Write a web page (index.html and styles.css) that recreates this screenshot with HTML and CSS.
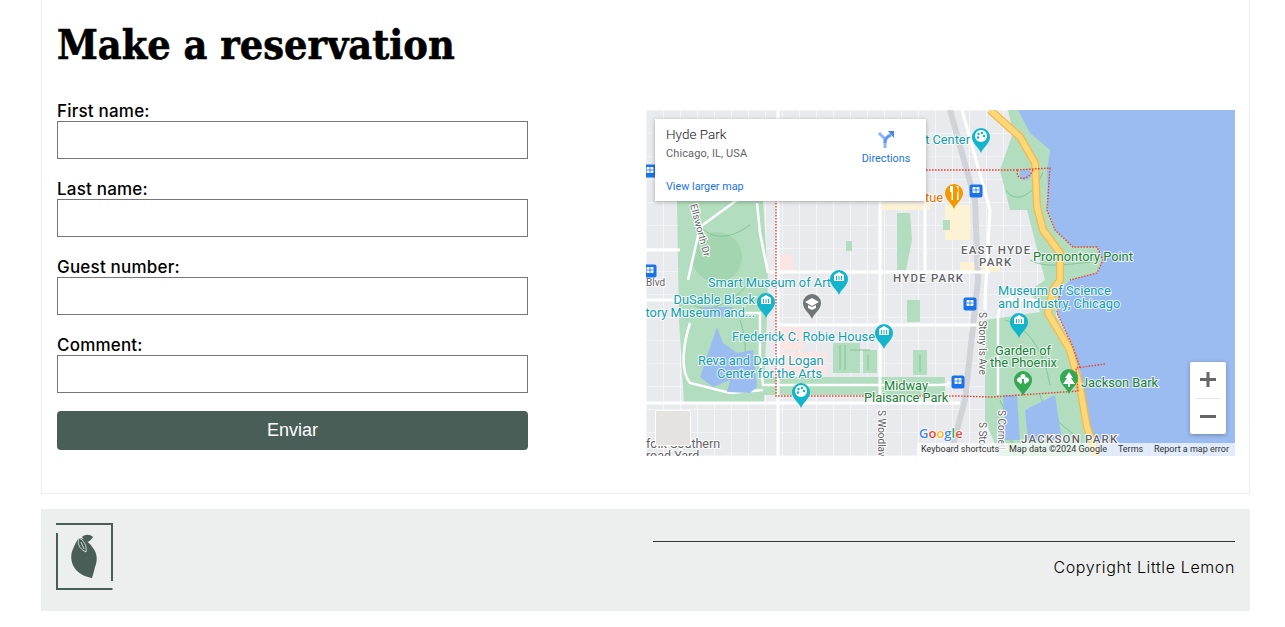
FILE: index.html
```html
<!DOCTYPE html>
<html lang="en">
<head>
<meta charset="utf-8">
<title>Make a reservation</title>
<link rel="stylesheet" href="styles.css">
</head>
<body>
<main class="card">
  <h1 class="title">Make a reservation</h1>
  <div class="columns">
    <form class="form">
      <div class="field"><label class="label" for="f1">First name:</label><input class="input" id="f1" type="text"></div>
      <div class="field"><label class="label" for="f2">Last name:</label><input class="input" id="f2" type="text"></div>
      <div class="field"><label class="label" for="f3">Guest number:</label><input class="input" id="f3" type="text"></div>
      <div class="field"><label class="label" for="f4">Comment:</label><input class="input" id="f4" type="text"></div>
      <button class="submit" type="button">Enviar</button>
    </form>
    <div class="map">
      <svg class="map-svg" viewBox="646 110 589 346" width="589" height="346" xmlns="http://www.w3.org/2000/svg">
        <defs>
          <pattern id="streets" x="646" y="110" width="17" height="23" patternUnits="userSpaceOnUse">
            <path class="street" d="M0 0V23M0 0H17"/>
          </pattern>
          <path id="pin" d="M0 0C-2-6-9-9-9-16A9 9 0 0 1 9-16C9-9 2-6 0 0Z"/>
          <g id="museum"><use href="#pin"/><path class="glyph" d="M-5-14V-20L0-23L5-20V-14ZM-3-19V-15H-2V-19ZM-.5-19V-15H.5V-19ZM2-19V-15H3V-19Z"/></g>
          <g id="palette"><use href="#pin"/><circle class="glyph" cx="0" cy="-17" r="6"/><circle cx="-2.5" cy="-19" r="1.2"/><circle cx="1" cy="-20" r="1.2"/><circle cx="3" cy="-17" r="1.2"/><circle cx="-3" cy="-15.5" r="1.2"/></g>
          <g id="transit"><rect class="transit" x="-6.5" y="-6.5" width="13" height="13" rx="2"/><rect class="glyph" x="-3.5" y="-4" width="7" height="6" rx="1"/><path class="transit-line" d="M0-4V2M-3.5-1H3.5M-2.5 4H2.5"/></g>
        </defs>
        <rect class="m-land" x="646" y="110" width="589" height="346"/>
        <rect fill="url(#streets)" x="646" y="110" width="589" height="346"/>
        <path class="m-pink" d="M778 327H803V350H778ZM778 352H827V375H778ZM778 255H793V273H778Z"/>
        <path class="m-sand" d="M880 203H930V210H880ZM945 205H970V240H945ZM960 262H1000V272H960Z"/>
        <path class="m-park" d="M677 200H763L768 280L764 403H684L679 320Z"/>
        <path class="m-park" d="M763 377H945V395H763Z"/>
        <path class="m-park" d="M897 213H910L912 240L906 270H897ZM943 220H950V230H943ZM907 300H920V322H907ZM833 343H860V373H833ZM863 350H877V373H863ZM913 350H927V375H913ZM846 241H852V251H846Z"/>
        <path class="m-park" d="M1000 170L1013 133L1008 110H1030L1050 150L1047 170L1048 210L1055 230L1073 247L1097 247L1103 260L1097 273L1070 280L1060 290L1057 313L1073 347L1080 370L1082 390L1087 423L1100 456H1000L985 420L985 320L1040 312L1030 290L1045 280L1027 210H1010Z"/>
        <circle class="m-park-d" cx="717" cy="257" r="25"/>
        <path class="m-sand" d="M1058 300L1075 345L1084 375L1072 345L1056 315Z"/>
        <path class="m-trail" d="M700 225C710 240 730 240 750 225M690 300C700 320 740 300 750 280M730 395C745 370 750 350 740 320M1006 190C1015 205 1035 195 1043 172M1030 260C1045 268 1062 265 1090 262M1005 320C1035 330 1045 360 1050 385M1040 395C1045 415 1070 430 1080 440M1000 400C1010 420 1010 440 1015 456M840 345V370M845 345V370M850 350H870M868 355V370M920 355V372"/>
        <path class="m-road-w m-thin" d="M727 313H760L760 360L763 385H940C948 385 955 382 960 377M690 323C683 345 680 370 690 383L730 393L763 390M688 280L700 227L737 200M757 203L760 233L768 273M1013 297C1003 300 998 308 998 318V395M1000 300H1040"/>
        <path class="m-water" d="M1018 110L1030 133L1050 150L1047 170L1048 210L1055 230L1073 247L1097 247L1103 260L1097 273L1070 280L1060 290L1057 313L1073 347L1080 370L1082 390L1087 423L1100 456H1235V110Z"/>
        <path class="m-water" d="M700 377L717 327L723 343L737 353L753 350L757 387L750 393L727 392L730 380L713 387ZM703 307H733V317H703ZM1003 395H1017L1020 440H1005ZM1025 410L1055 395L1062 440H1028ZM1020 172C1028 165 1033 172 1030 178C1024 182 1018 180 1020 172Z"/>
        <path class="m-rail" d="M950 110L975 200L978 280L965 400L950 456"/>
        <path class="m-road-w" d="M778 110V456M880 200V403M646 403H960M770 272H990M646 250H680M778 325H980M985 310V300M925 200V272M646 300H680M962 110L990 210L985 300"/>
        <path class="m-hwy-b" d="M990 110L1020 137L1035 163L1037 207L1043 230L1060 253L1060 280L1053 290L1048 313L1070 350L1080 387L1087 427L1097 456"/>
        <path class="m-hwy" d="M990 110L1020 137L1035 163L1037 207L1043 230L1060 253L1060 280L1053 290L1048 313L1070 350L1080 387L1087 427L1097 456"/>
        <path class="m-border" d="M776 200V396H958L992 397L1078 391L1076 368L1105 364M926 170H1017M1017 170L1050 168L1047 210L1055 230L1073 247L1097 247L1103 260L1097 273L1070 280M1018 170C1014 180 1028 182 1033 170M1060 290L1057 313L1073 347L1080 368"/>
        <text class="t-teal" x="970" y="144" text-anchor="end">t Center</text>
        <text class="t-orange" x="943" y="202" text-anchor="end">tue</text>
        <text class="t-teal" x="708" y="287">Smart Museum of Art</text>
        <text class="t-teal" x="755" y="304" text-anchor="end">DuSable Black</text>
        <text class="t-teal" x="755" y="317" text-anchor="end">story Museum and...</text>
        <text class="t-teal" x="732" y="341">Frederick C. Robie House</text>
        <text class="t-teal" x="698" y="365">Reva and David Logan</text>
        <text class="t-teal" x="822" y="378" text-anchor="end">Center for the Arts</text>
        <text class="t-green" x="884" y="390">Midway</text>
        <text class="t-green" x="864" y="402">Plaisance Park</text>
        <text class="t-green" x="1033" y="261">Promontory Point</text>
        <text class="t-teal" x="998" y="295">Museum of Science</text>
        <text class="t-teal" x="998" y="308">and Industry, Chicago</text>
        <text class="t-green" x="995" y="355">Garden of</text>
        <text class="t-green" x="990" y="367">the Phoenix</text>
        <text class="t-green" x="1081" y="387">Jackson Bark</text>
        <text class="t-area" x="961" y="254">EAST HYDE</text>
        <text class="t-area" x="979" y="266">PARK</text>
        <text class="t-area" x="893" y="282">HYDE PARK</text>
        <text class="t-area" x="1021" y="443">JACKSON PARK</text>
        <text class="t-road" transform="translate(979 312) rotate(90)">S Stony Is Ave</text>
        <text class="t-road" transform="translate(998 410) rotate(90)">S Cornell</text>
        <text class="t-road" transform="translate(979 422) rotate(90)">S Sto</text>
        <text class="t-road" transform="translate(878 410) rotate(90)">S Woodlaw</text>
        <text class="t-road" transform="translate(690 205) rotate(75)">Ellsworth Dr</text>
        <text class="t-road" x="646" y="286">Blvd</text>
        <text class="t-road-l" x="646" y="448">folk Southern</text>
        <text class="t-road-l" x="646" y="460">road Yard</text>
        <use class="p-teal" href="#palette" x="981" y="153"/>
        <use class="p-orange" href="#pin" x="954" y="209"/>
        <path class="glyph" d="M950 186V192H951.5V200H953V186ZM956 186C958.5 188 958.5 192 957 193V200H958.5V186Z"/>
        <use class="p-teal" href="#museum" x="839" y="295"/>
        <use class="p-teal" href="#museum" x="766" y="318"/>
        <use class="p-grey" href="#pin" x="812" y="319"/>
        <path class="glyph" d="M812 298L819 302L812 306L805 302ZM808 305V308L812 310L816 308V305L812 307Z"/>
        <use class="p-teal" href="#museum" x="884" y="349"/>
        <use class="p-teal" href="#palette" x="801" y="408"/>
        <use class="p-teal" href="#museum" x="1019" y="338"/>
        <use class="p-green" href="#pin" x="1023" y="396"/>
        <path class="glyph" d="M1023 374A2.3 2.3 0 0 1 1023 379A2.3 2.3 0 0 1 1023 374ZM1018 378A2.3 2.3 0 0 1 1021 382A2.3 2.3 0 0 1 1018 378ZM1028 378A2.3 2.3 0 0 1 1025 382A2.3 2.3 0 0 1 1028 378ZM1020 384A2.3 2.3 0 0 1 1022 381A2.3 2.3 0 0 1 1020 384ZM1026 384A2.3 2.3 0 0 1 1024 381A2.3 2.3 0 0 1 1026 384Z"/>
        <use class="p-green" href="#pin" x="1069" y="394"/>
        <path class="glyph" d="M1069 372L1073 378H1071L1075 384H1063L1067 378H1065ZM1068 384H1070V387H1068Z"/>
        <use href="#transit" x="976" y="191"/>
        <use href="#transit" x="970" y="304"/>
        <use href="#transit" x="958" y="382"/>
        <use href="#transit" x="650" y="171"/>
        <use href="#transit" x="650" y="271"/>
        <text class="t-google" x="919" y="438"><tspan class="g-b">G</tspan><tspan class="g-r">o</tspan><tspan class="g-y">o</tspan><tspan class="g-b">g</tspan><tspan class="g-g">l</tspan><tspan class="g-r">e</tspan></text>
      </svg>
      <section class="info">
        <div class="info-top">
          <div>
            <div class="info-name">Hyde Park</div>
            <div class="info-addr">Chicago, IL, USA</div>
          </div>
          <a class="info-dir">
            <svg class="dir-icon" width="20" height="20" viewBox="0 0 20 20" xmlns="http://www.w3.org/2000/svg">
              <path class="dir-a" d="M3 3L9 9V18"/>
              <path class="dir-b" d="M9 13C9 8 12 6 15 5"/>
              <path class="dir-c" d="M12 1H18V8Z"/>
            </svg>
            <span>Directions</span>
          </a>
        </div>
        <a class="info-link">View larger map</a>
      </section>
      <div class="pegman"></div>
      <div class="zoom">
        <svg class="zoom-btn" width="36" height="36" viewBox="0 0 36 36" xmlns="http://www.w3.org/2000/svg"><path d="M10 16H26V19H10ZM16.500 10H19.500V25H16.500Z"/></svg>
        <div class="zoom-sep"></div>
        <svg class="zoom-btn" width="36" height="35" viewBox="0 0 36 35" xmlns="http://www.w3.org/2000/svg"><path d="M10 16H26V19H10Z"/></svg>
      </div>
      <div class="attrib">
        <span class="attrib-key">Keyboard shortcuts</span>
        <span class="attrib-data">Map data ©2024 Google</span>
        <span class="attrib-terms">Terms</span>
        <span class="attrib-report">Report a map error</span>
      </div>
    </div>
  </div>
</main>
<footer class="footer">
  <svg class="logo" width="58" height="69" viewBox="0 0 58 69" xmlns="http://www.w3.org/2000/svg">
    <path class="logo-frame" d="M1 10V66H56.500M0 1H56V58"/>
    <path class="logo-fruit" d="M23 15C28 15 34 20 37 25C41 30 42 37 39 44C38 48 37 52 36 55C30 54 22 51 18 44C14 37 15 30 17 26C19 21 21 17 23 15Z"/>
    <path class="logo-fruit" d="M26 14C29 11 34 11 37 14C35 17 33 19 30 19Z"/>
    <path class="logo-vein" d="M23 15C21 20 23 26 30 29C31 23 28 17 23 15ZM25 19L28 26"/>
  </svg>
  <div class="footer-right">
    <hr class="rule">
    <p class="copy">Copyright Little Lemon</p>
  </div>
</footer>
</body>
</html>
```
FILE: styles.css
```css
* { box-sizing: border-box; }
body {
  margin: 0 35px 16px 41px;
  background: #fff;
  color: #000;
  font-family: "Inter", "Liberation Sans", sans-serif;
}
.card {
  border: 1px solid #eeeeee;
  border-top: 0;
  padding: 0 14px 37px 15px;
  height: 494px;
}
.title {
  margin: 0;
  padding-top: 18px;
  height: 100px;
  font-family: "DejaVu Serif", "Liberation Serif", serif;
  font-stretch: condensed;
  font-size: 41px;
  line-height: 55px;
  font-weight: 700;
  -webkit-text-stroke: .6px #000;
}
.columns {
  display: grid;
  grid-template-columns: 589px 589px;
  align-items: start;
}
.form {
  width: 471px;
  display: flex;
  flex-direction: column;
}
.field {
  display: flex;
  flex-direction: column;
  margin-bottom: 19px;
}
.label {
  height: 21px;
  padding-top: 1px;
  font-size: 17px;
  letter-spacing: .2px;
  line-height: 21px;
  font-weight: 500;
}
.input {
  height: 38px;
  width: 100%;
  border: 1px solid #767676;
  border-radius: 0;
  background: #fff;
  padding: 0 4px;
}
.submit {
  height: 39px;
  margin-top: -1px;
  border: 0;
  border-radius: 4px;
  background: #495e57;
  color: #fff;
  font-family: "Liberation Sans", sans-serif;
  font-size: 18px;
}
.map {
  position: relative;
  width: 589px;
  height: 346px;
  margin-top: 10px;
  overflow: hidden;
}
.map-svg { display: block; }
.m-land { fill: #e8eaed; }
.street { fill: none; stroke: #fbfbfc; stroke-width: 1.2; }
.m-pink { fill: #fbe6e3; }
.m-sand { fill: #fdf3d4; }
.m-park { fill: #b2ddbe; }
.m-park-d { fill: #a4d5b1; }
.m-trail { fill: none; stroke: #7cc491; stroke-width: .9; }
.m-water { fill: #9bbcf0; }
.m-rail { fill: none; stroke: #d0d3d8; stroke-width: 6; }
.m-road-w { fill: none; stroke: #fff; stroke-width: 3; }
.m-thin { stroke-width: 2.5; }
.m-hwy-b { fill: none; stroke: #f1b94b; stroke-width: 8; stroke-linejoin: round; }
.m-hwy { fill: none; stroke: #fdd87a; stroke-width: 5.5; stroke-linejoin: round; }
.m-border { fill: none; stroke: #ea4335; stroke-width: 1.4; stroke-dasharray: 1.6 1.4; }
.t-teal, .t-green, .t-orange {
  font-family: "Roboto", sans-serif;
  font-size: 12.8px;
  paint-order: stroke;
  stroke: #fff;
  stroke-width: 2px;
  stroke-opacity: .8;
}
.t-teal { fill: #129eaf; }
.t-green { fill: #188038; }
.t-orange { fill: #e37400; }
.t-area {
  font-family: "Roboto", sans-serif;
  font-size: 11.5px;
  font-weight: 500;
  letter-spacing: 1.2px;
  fill: #5f6368;
  paint-order: stroke;
  stroke: #fff;
  stroke-width: 2px;
}
.t-road, .t-road-l {
  font-family: "Roboto", sans-serif;
  font-size: 10px;
  fill: #5f6368;
  paint-order: stroke;
  stroke: #fff;
  stroke-width: 2px;
}
.t-road-l { font-size: 12.5px; }
.t-google {
  font-family: "Open Sans", sans-serif;
  font-size: 13px;
  font-weight: 600;
  paint-order: stroke;
  stroke: #fff;
  stroke-width: 1.5px;
}
.g-b { fill: #4285f4; }
.g-r { fill: #ea4335; }
.g-y { fill: #fbbc05; }
.g-g { fill: #34a853; }
.p-teal { fill: #12b5cb; }
.p-orange { fill: #f29900; }
.p-grey { fill: #70757a; }
.p-green { fill: #34a853; }
.glyph { fill: #fff; }
.transit { fill: #1a73e8; }
.transit-line { fill: none; stroke: #1a73e8; stroke-width: .8; }
.info {
  position: absolute;
  left: 9px;
  top: 9px;
  width: 271px;
  height: 82px;
  padding: 8px 11px;
  background: #fff;
  box-shadow: 0 1px 4px rgba(0, 0, 0, .3);
  font-family: "Roboto", sans-serif;
}
.info-top {
  display: flex;
  justify-content: space-between;
  height: 50px;
}
.info-name {
  font-size: 13.5px;
  font-weight: 300;
  line-height: 14px;
  color: #111;
}
.info-addr {
  font-size: 11px;
  letter-spacing: .1px;
  line-height: 12px;
  margin-top: 7px;
  color: #5f6368;
}
.info-dir {
  display: flex;
  flex-direction: column;
  align-items: center;
  width: 48px;
  margin-right: 5px;
  font-size: 10.8px;
  line-height: 12px;
  color: #1a73e8;
}
.dir-icon { display: block; margin-top: 3px; margin-bottom: 3px; }
.dir-a { fill: none; stroke: #8ab4f8; stroke-width: 3; }
.dir-b { fill: none; stroke: #5e97f6; stroke-width: 3; }
.dir-c { fill: #4285f4; }
.info-link {
  display: block;
  margin-top: 4px;
  font-size: 10.8px;
  line-height: 12px;
  color: #1a73e8;
}
.pegman {
  position: absolute;
  left: 9px;
  top: 300px;
  width: 36px;
  height: 36px;
  background: #e5e3df;
  border: 1px solid #fff;
  border-radius: 2px;
}
.zoom {
  position: absolute;
  left: 544px;
  top: 252px;
  width: 36px;
  height: 72px;
  background: #fff;
  border-radius: 2px;
  box-shadow: 0 1px 4px rgba(0, 0, 0, .3);
}
.zoom-btn { display: block; fill: #666; }
.zoom-sep { height: 1px; margin: 0 5px; background: #e6e6e6; }
.attrib {
  position: absolute;
  right: 0;
  bottom: 0;
  width: 318px;
  height: 13px;
  display: flex;
  background: rgba(255, 255, 255, .7);
  font-family: "Roboto", sans-serif;
  font-size: 9px;
  line-height: 13px;
  color: #333;
}
.attrib span { display: block; white-space: nowrap; padding-left: 6px; padding-right: 6px; }
.attrib-key { width: 87px; padding-left: 4px !important; padding-right: 0 !important; }
.attrib-data { width: 109px; padding-left: 6px !important; }
.attrib-terms { width: 36px; border-left: 1px solid #e6e6e6; padding-left: 5px !important; }
.attrib-report { flex: 1; border-left: 1px solid #e6e6e6; padding-left: 5px !important; }
.footer {
  margin-top: 15px;
  height: 102px;
  width: 1209px;
  background: #edefee;
  display: flex;
  justify-content: space-between;
  padding: 14px 15px 0 15px;
}
.logo { display: block; }
.logo-frame { fill: none; stroke: #495e57; stroke-width: 2; }
.logo-fruit { fill: #495e57; }
.logo-vein { fill: none; stroke: #edefee; stroke-width: .8; }
.footer-right { width: 582px; }
.rule {
  margin: 18px 0 0;
  border: 0;
  border-top: 1px solid #333;
}
.copy {
  margin: 14px 0 0;
  text-align: right;
  font-size: 16px;
  font-weight: 300;
  letter-spacing: .62px;
  line-height: 22px;
  color: #000;
}
```
